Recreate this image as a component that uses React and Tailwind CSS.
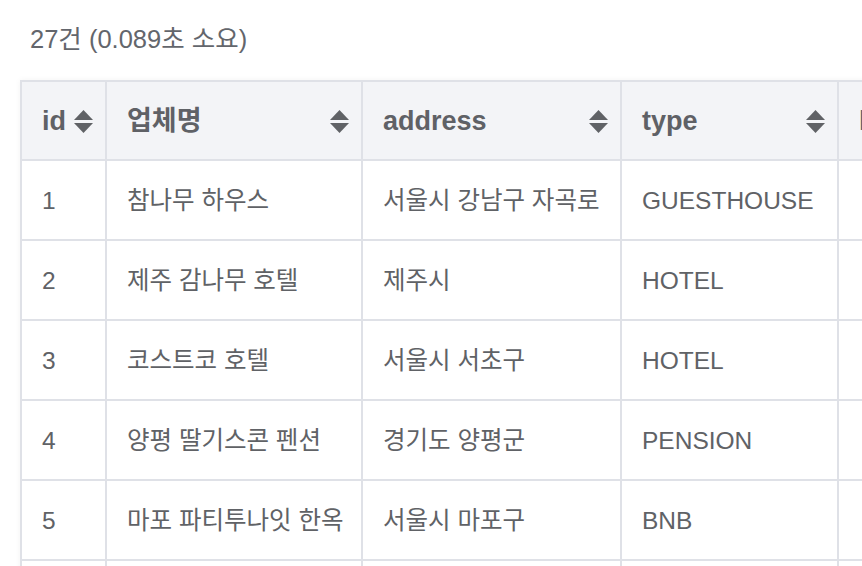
import React from 'react';

const columns = [
  { key: 'id', label: 'id' },
  { key: 'name', label: '업체명' },
  { key: 'address', label: 'address' },
  { key: 'type', label: 'type' },
  { key: 'lat', label: 'lat' },
];

const rows = [
  { id: 1, name: '참나무 하우스', address: '서울시 강남구 자곡로', type: 'GUESTHOUSE', lat: '' },
  { id: 2, name: '제주 감나무 호텔', address: '제주시', type: 'HOTEL', lat: '' },
  { id: 3, name: '코스트코 호텔', address: '서울시 서초구', type: 'HOTEL', lat: '' },
  { id: 4, name: '양평 딸기스콘 펜션', address: '경기도 양평군', type: 'PENSION', lat: '' },
  { id: 5, name: '마포 파티투나잇 한옥', address: '서울시 마포구', type: 'BNB', lat: '' },
];

const gridCols = 'grid grid-cols-[85px_256px_259px_217px_240px]';
const cell = 'h-[80px] flex items-center pl-5 pr-3 pt-[3px] border-r-2 border-b-2 border-[#dfe1e7] text-[24.5px] whitespace-nowrap';

function SortIcon() {
  return (
    <svg width="19" height="23" viewBox="0 0 19 23" className="shrink-0 fill-[#606266]">
      <path d="M9.5 0 L19 10 L0 10 Z" />
      <path d="M0 13 L19 13 L9.5 23 Z" />
    </svg>
  );
}

function App() {
  return (
    <div
      className="w-[862px] h-[566px] overflow-hidden bg-white text-[#606266]"
      style={{ fontFamily: '"Liberation Sans", "Noto Sans CJK KR", sans-serif' }}
    >
      <div className="h-[80px] pl-[30px] pt-[24px] text-[25.5px] leading-[30px] text-[#63666c]">
        27건 (0.089초 소요)
      </div>
      <div className="ml-[20px] w-max border-l-2 border-t-2 border-[#dfe1e7] shadow-[0_0_6px_rgba(0,0,0,0.05)]">
        <div className={`${gridCols} bg-[#f3f4f7]`}>
          {columns.map((col) => (
            <div
              key={col.key}
              className="h-[79px] flex items-center justify-between gap-2 pl-5 pr-3 pt-[2px] border-r-2 border-b-2 border-[#dfe1e7] text-[27px] font-bold text-[#5f6166]"
            >
              <span>{col.label}</span>
              <SortIcon />
            </div>
          ))}
        </div>
        {rows.map((row) => (
          <div key={row.id} className={gridCols}>
            {columns.map((col) => (
              <div key={col.key} className={cell}>
                {row[col.key]}
              </div>
            ))}
          </div>
        ))}
        {/* next row, below the fold */}
        <div className={gridCols}>
          {columns.map((col) => (
            <div key={col.key} className={cell} />
          ))}
        </div>
      </div>
    </div>
  );
}

export default App;
